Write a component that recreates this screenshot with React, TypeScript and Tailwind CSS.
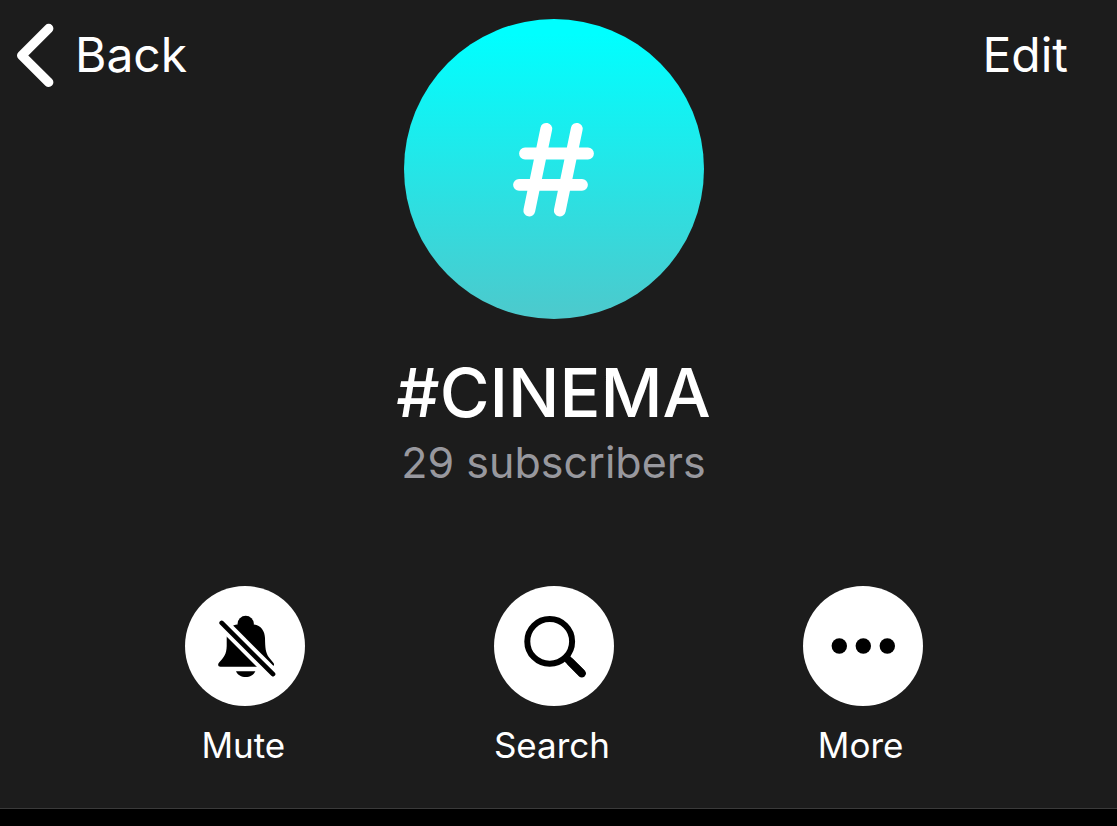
import type { ReactNode } from "react";

function ChevronLeft() {
  return (
    <svg aria-hidden="true" width="40" height="66" viewBox="0 0 40 66" fill="none" stroke="white" strokeWidth="9.4" strokeLinecap="round" strokeLinejoin="round">
      <path d="M32.7 6.500 5.700 33.500l27 26.800" />
    </svg>
  );
}

function HashIcon() {
  return (
    <svg aria-hidden="true" width="120" height="140" viewBox="0 0 120 140" fill="none" stroke="white" strokeWidth="11.8" strokeLinecap="round">
      <path d="M52.3 29.800 35.300 111.500M82.800 29.800 65.800 111.500M31 54.500H94M25 85.800H88" />
    </svg>
  );
}

function BellOffIcon() {
  return (
    <svg aria-hidden="true" className="size-full" viewBox="0 0 120 120">
      <circle cx="60.7" cy="38" r="8.2" />
      <path d="M52 38.500H69C76 39.500 79.800 45 80 52C80.200 62 80.500 66.500 84 71.500L88.500 77C90 79.500 88 80.800 86 80.800H35.500C33 80.800 32.300 78.500 34.300 76.200C39 71.500 41.500 68 41.700 60V52C42 45 45 39.500 52 38.500Z" />
      <path d="M51 85.300H70.300C67.500 93 53.800 93 51 85.300Z" />
      <path d="M30 30.200 96 96.200" stroke="white" strokeWidth="12.4" />
      <path d="M36.700 36.900 88 88.200" stroke="black" strokeWidth="4.700" strokeLinecap="round" />
    </svg>
  );
}

function SearchIcon() {
  return (
    <svg aria-hidden="true" className="size-full" viewBox="0 0 120 120" fill="none" stroke="black">
      <circle cx="55.7" cy="55.4" r="22.4" strokeWidth="6" />
      <path d="M72.500 72 87.800 87.300" strokeWidth="7.800" />
      <path d="M77 76.500 87.800 87.300" strokeWidth="8" strokeLinecap="round" />
    </svg>
  );
}

function MoreIcon() {
  return (
    <svg aria-hidden="true" className="size-full" viewBox="0 0 120 120">
      <circle cx="36.3" cy="60" r="7.7" />
      <circle cx="60.3" cy="60" r="7.7" />
      <circle cx="84.3" cy="60" r="7.7" />
    </svg>
  );
}

function Action({ label, icon }: { label: string; icon: ReactNode }) {
  return (
    <button type="button" className="flex flex-col items-center gap-[17px]">
      <span className="size-[120px] rounded-full bg-white">{icon}</span>
      <span className="pr-1 text-[35px] leading-[44px]">{label}</span>
    </button>
  );
}

export default function App() {
  return (
    <div className="min-h-screen bg-black font-['Inter',sans-serif] text-white">
      <main className="border-b border-[#3a3a3a] bg-[#1c1c1c] pt-[19px] pb-[41px]">
        <header className="grid grid-cols-[1fr_auto_1fr] items-start pr-[25px] pl-4">
          <button type="button" className="mt-[3px] flex items-center gap-[19px] justify-self-start text-[48px] leading-[66px]">
            <ChevronLeft />
            Back
          </button>
          <div className="flex size-[300px] items-center justify-center rounded-full bg-linear-to-b/srgb from-[#00ffff] from-5% to-[#4dc9cc]">
            <HashIcon />
          </div>
          <button type="button" className="mt-[3px] mr-6 justify-self-end text-[48px] leading-[66px]">Edit</button>
        </header>
        <section className="mt-[31px] pr-[10px] text-center">
          <h1 className="text-[68px] leading-[84px] font-medium">#CINEMA</h1>
          <p className="text-[43px] leading-[56px] text-[#98989e]">29 subscribers</p>
        </section>
        <nav aria-label="Channel actions" className="mt-24 grid grid-cols-3 pr-[100px] pl-[91px]">
          <Action label="Mute" icon={<BellOffIcon />} />
          <Action label="Search" icon={<SearchIcon />} />
          <Action label="More" icon={<MoreIcon />} />
        </nav>
      </main>
    </div>
  );
}
